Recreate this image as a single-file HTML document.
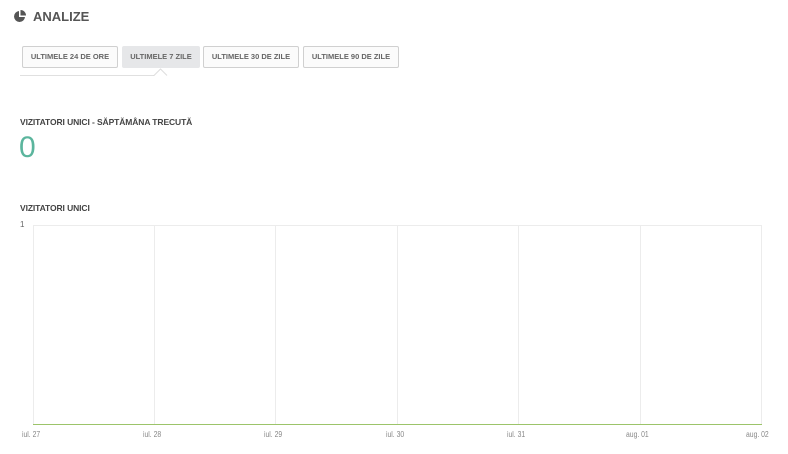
<!DOCTYPE html>
<html><head><style>
body{margin:0;width:788px;height:454px;background:#fff;font-family:"Liberation Sans",sans-serif;position:relative;overflow:hidden}
.a{position:absolute}
.btn{position:absolute;top:46px;height:20px;border:1px solid #d0d0d0;border-radius:2px;background:#fbfbfb;font-size:7.5px;font-weight:bold;color:#666;line-height:20px;text-align:center;box-sizing:content-box}
.h{font-size:8.5px;font-weight:bold;color:#444;letter-spacing:-0.1px}
.v{position:absolute;top:225px;width:1px;height:200px;background:#ececec}
.l{position:absolute;top:430px;font-size:8px;color:#888;transform:scaleX(.85);transform-origin:left}
</style></head><body>
<svg class="a" style="left:13px;top:10px" width="13" height="13" viewBox="0 0 13 13"><path d="M6 1A5.5 5.5 0 1 0 12 7H6Z" fill="#555"/><path d="M7.5 0A5.5 5.5 0 0 1 13 5.5H7.5Z" fill="#555"/></svg>
<div class="a" style="left:33px;top:9px;font-size:13px;font-weight:bold;color:#555">ANALIZE</div>
<div class="btn" style="left:22px;width:94px">ULTIMELE 24 DE ORE</div>
<div class="btn" style="left:122px;width:76px;background:#e6e7e9;border-color:#e6e7e9">ULTIMELE 7 ZILE</div>
<div class="btn" style="left:203px;width:94px">ULTIMELE 30 DE ZILE</div>
<div class="btn" style="left:303px;width:94px">ULTIMELE 90 DE ZILE</div>
<div class="a" style="left:20px;top:75px;width:134px;height:1px;background:#e0e0e0"></div>
<svg class="a" style="left:153px;top:68px" width="16" height="8"><path d="M0 7.5H1L7.5 1L14 7.5" fill="none" stroke="#ddd"/></svg>
<div class="a h" style="left:20px;top:117px">VIZITATORI UNICI - SĂPTĂMÂNA TRECUTĂ</div>
<div class="a" style="left:19px;top:131px;font-size:30px;color:#5bb59d">0</div>
<div class="a h" style="left:20px;top:203px">VIZITATORI UNICI</div>
<div class="a" style="left:20px;top:220px;font-size:8px;color:#666">1</div>
<div class="a" style="left:33px;top:225px;width:728px;height:1px;background:#ececec"></div>
<div class="v" style="left:33px"></div><div class="v" style="left:154px"></div><div class="v" style="left:275px"></div><div class="v" style="left:397px"></div><div class="v" style="left:518px"></div><div class="v" style="left:640px"></div><div class="v" style="left:761px"></div>
<div class="a" style="left:33px;top:424px;width:729px;height:1px;background:#9cc46a"></div>
<div class="l" style="left:22px">iul. 27</div><div class="l" style="left:143px">iul. 28</div><div class="l" style="left:264px">iul. 29</div><div class="l" style="left:386px">iul. 30</div><div class="l" style="left:507px">iul. 31</div><div class="l" style="left:626px">aug. 01</div><div class="l" style="left:746px">aug. 02</div>
</body></html>
